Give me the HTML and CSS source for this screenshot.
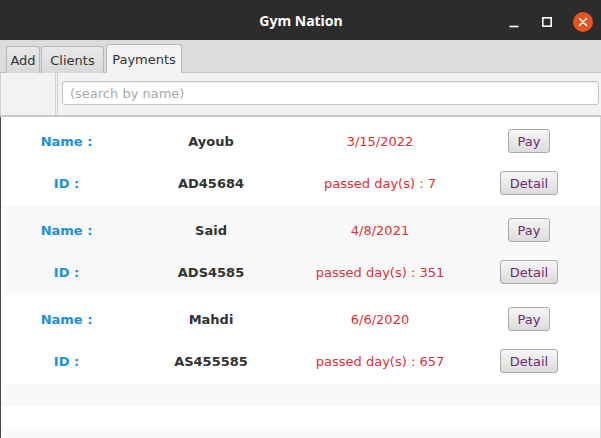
FILE: index.html
```html
<!DOCTYPE html>
<html>
<head>
<meta charset="utf-8">
<title>Gym Nation</title>
<link rel="stylesheet" href="styles.css">
</head>
<body>
<div class="window">
  <header class="titlebar">
    <span class="title">Gym Nation</span>
    <div class="controls">
      <svg class="ctl" width="14" height="14" viewBox="0 0 14 14"><path d="M2.5 11.5h9" stroke="#fff" stroke-width="1.6"/></svg>
      <svg class="ctl" width="14" height="14" viewBox="0 0 14 14"><rect x="2.8" y="2.8" width="8.4" height="8.4" fill="none" stroke="#fff" stroke-width="1.6"/></svg>
      <svg class="ctl close" width="20" height="20" viewBox="0 0 20 20"><circle cx="10" cy="10" r="10" fill="#e8541f"/><path d="M6.5 6.5l7 7M13.5 6.5l-7 7" stroke="#fff" stroke-width="1.6" stroke-linecap="round"/></svg>
    </div>
  </header>
  <nav class="tabbar">
    <div class="tab tab-add">Add</div>
    <div class="tab tab-clients">Clients</div>
    <div class="tab tab-payments selected">Payments</div>
  </nav>
  <div class="toolbar">
    <div class="tool-left"></div>
    <div class="sep"></div>
    <div class="search-wrap"><input class="search" type="text" placeholder="(search by name)"></div>
  </div>
  <div class="list">
    <div class="row">
      <span class="label">Name :</span><span class="value">Ayoub</span><span class="date">3/15/2022</span><span class="cell"><button class="btn">Pay</button></span>
      <span class="label">ID :</span><span class="value">AD45684</span><span class="date">passed day(s) : 7</span><span class="cell"><button class="btn">Detail</button></span>
    </div>
    <div class="row alt">
      <span class="label">Name :</span><span class="value">Said</span><span class="date">4/8/2021</span><span class="cell"><button class="btn">Pay</button></span>
      <span class="label">ID :</span><span class="value">ADS4585</span><span class="date">passed day(s) : 351</span><span class="cell"><button class="btn">Detail</button></span>
    </div>
    <div class="row">
      <span class="label">Name :</span><span class="value">Mahdi</span><span class="date">6/6/2020</span><span class="cell"><button class="btn">Pay</button></span>
      <span class="label">ID :</span><span class="value">AS455585</span><span class="date">passed day(s) : 657</span><span class="cell"><button class="btn">Detail</button></span>
    </div>
    <div class="empty alt"></div>
    <div class="empty"></div>
    <div class="empty alt"></div>
  </div>
</div>
</body>
</html>
```

FILE: styles.css
```css
* { box-sizing: border-box; }
html, body { margin: 0; padding: 0; }
body {
  width: 601px;
  height: 438px;
  overflow: hidden;
  background: #2b2b2b;
  font-family: "DejaVu Sans", sans-serif;
}
.window {
  display: flex;
  flex-direction: column;
  height: 438px;
}
.titlebar {
  height: 40px;
  flex: none;
  background: #2c2c2c;
  display: flex;
  align-items: center;
  justify-content: center;
  position: relative;
  border-radius: 6px 6px 0 0;
}
.title {
  color: #ffffff;
  font-family: "Noto Sans", "DejaVu Sans", sans-serif;
  font-weight: bold;
  font-size: 14px;
  margin-left: 1px;
}
.controls {
  position: absolute;
  right: 8px;
  top: 12px;
  display: flex;
  align-items: center;
  gap: 19px;
}
.tabbar {
  height: 33px;
  flex: none;
  background: #dcdcdc;
  display: flex;
  align-items: flex-end;
  padding-left: 6px;
  gap: 1px;
  border-bottom: 1px solid #c4c4c4;
}
.tab {
  height: 27px;
  font-size: 13px;
  color: #333;
  display: flex;
  align-items: center;
  justify-content: center;
  background: linear-gradient(#e9e9e9, #d9d9d9);
  border: 1px solid #b8b8b8;
  border-bottom: none;
  border-radius: 3px 3px 0 0;
  margin-bottom: -1px;
}
.tab-add { width: 34px; }
.tab-clients { width: 63px; }
.tab-payments { width: 76px; }
.tab.selected {
  height: 29px;
  background: #f3f3f3;
  margin-left: 1px;
  position: relative;
  z-index: 1;
}
.toolbar {
  height: 44px;
  flex: none;
  background: #f2f2f2;
  display: flex;
  border-bottom: 2px solid #c8c8c8;
  border-left: 1px solid #d0d0d0;
}
.tool-left { width: 54px; flex: none; }
.sep {
  width: 3px;
  flex: none;
  border-left: 1px solid #d0d0d0;
  border-right: 1px solid #d0d0d0;
}
.search-wrap {
  flex: 1;
  padding: 8px 2px 0 4px;
}
.search {
  width: 100%;
  height: 24px;
  border: 1px solid #c2c2c2;
  border-radius: 3px;
  background: #fff;
  font-family: "DejaVu Sans", sans-serif;
  font-size: 13px;
  padding: 0 7px;
  outline: none;
  box-shadow: inset 0 1px 1px rgba(0,0,0,0.05);
}
.search::placeholder { color: #a9a9a9; }
.list {
  flex: 1;
  background: #ffffff;
  border-left: 1px solid #4a4a4a;
  border-right: 1px solid #d8d8d8;
  overflow: hidden;
}
.row {
  height: 89px;
  display: grid;
  grid-template-columns: 131px 158px 180px 118px;
  grid-template-rows: 42px 42px;
  padding-top: 3px;
  align-items: center;
  justify-items: center;
  font-size: 13px;
}
.alt { background: #f9f9f9; }
.empty { height: 22px; }
.label { color: #1b8fdc; font-weight: bold; }
.value { color: #333333; font-weight: bold; }
.date { color: #de2f33; }
.cell { display: flex; justify-content: center; }
.btn {
  height: 24px;
  padding: 0 9px;
  font-family: "DejaVu Sans", sans-serif;
  font-size: 13px;
  color: #6d2a70;
  background: linear-gradient(#f6f6f6, #dcdcdc);
  border: 1px solid #aaaaaa;
  border-radius: 3px;
}
```
